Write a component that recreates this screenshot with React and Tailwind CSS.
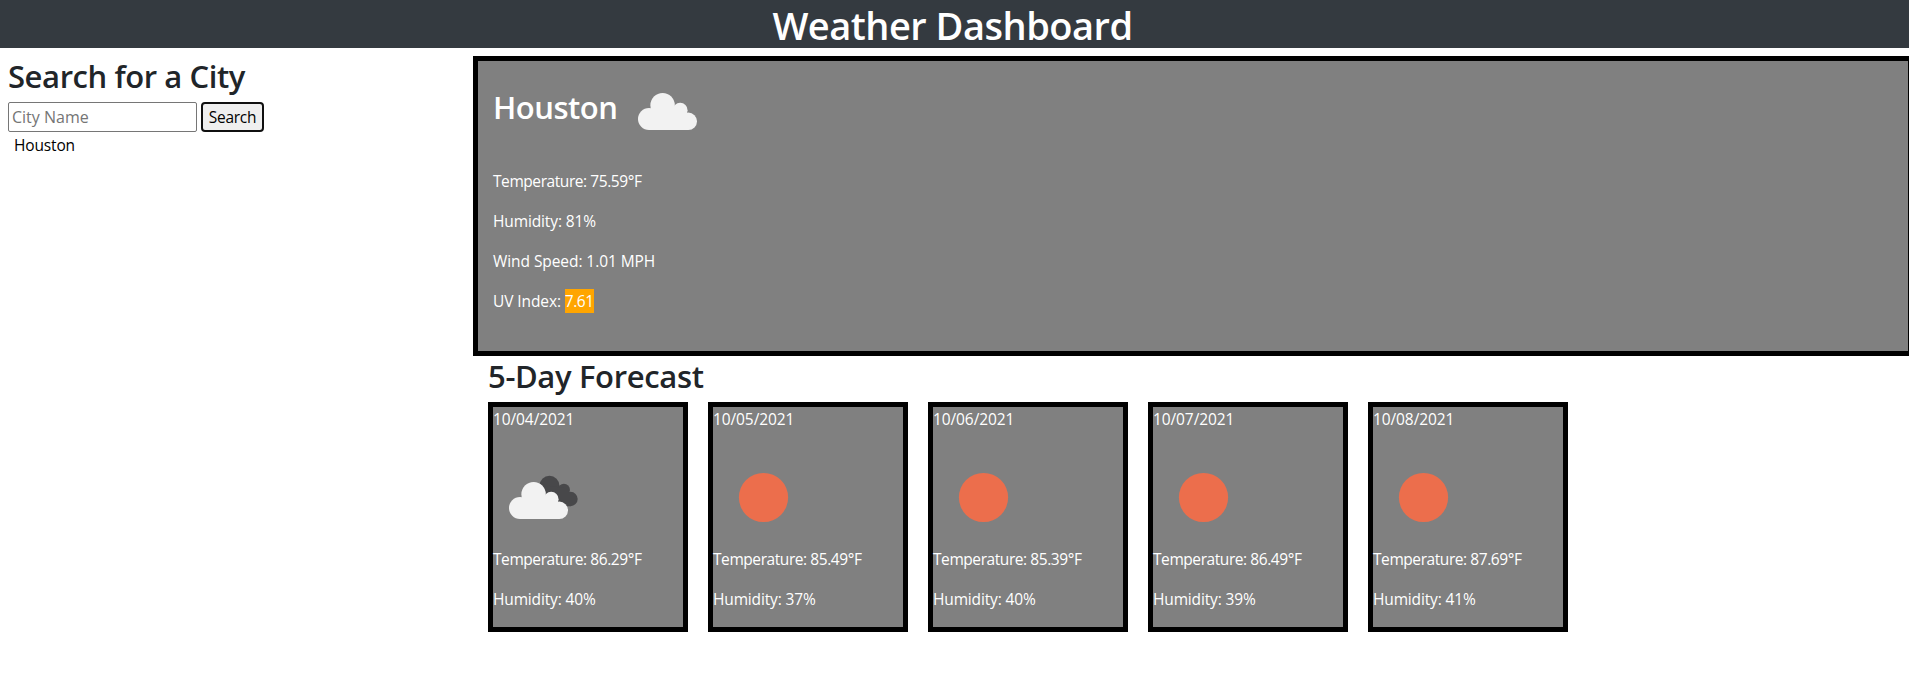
const forecast = [
  { date: '10/04/2021', icon: 'clouds', temp: '86.29', humidity: 40 },
  { date: '10/05/2021', icon: 'sun', temp: '85.49', humidity: 37 },
  { date: '10/06/2021', icon: 'sun', temp: '85.39', humidity: 40 },
  { date: '10/07/2021', icon: 'sun', temp: '86.49', humidity: 39 },
  { date: '10/08/2021', icon: 'sun', temp: '87.69', humidity: 41 },
];

function CloudShape() {
  return (
    <>
      <circle cx="11" cy="26" r="11" />
      <circle cx="24.6" cy="12.2" r="12.2" />
      <circle cx="42.2" cy="17.2" r="7.4" />
      <circle cx="50.3" cy="28.3" r="8.7" />
      <path d="M11 37V20L24 12L42 15L50.3 25V37Z" />
    </>
  );
}

function WeatherIcon({ type }) {
  return (
    <svg width="100" height="100" viewBox="0 0 100 100" className="block shrink-0">
      {type === 'sun' && <circle cx="50.5" cy="50.5" r="24.6" fill="#ec6e4c" />}
      {type === 'clouds' && (
        <>
          <g fill="#48484a" transform="translate(36.3 28.8) scale(0.82)">
            <CloudShape />
          </g>
          <g fill="#f2f2f2" transform="translate(16 35)">
            <CloudShape />
          </g>
        </>
      )}
      {type === 'cloud' && (
        <g fill="#f2f2f2" transform="translate(20 32)">
          <CloudShape />
        </g>
      )}
    </svg>
  );
}

function ForecastCard({ day }) {
  return (
    <article className="h-[230px] w-[200px] border-5 border-black bg-[#808080] text-[15.5px] leading-6 text-white">
      <p className="tracking-[-0.1px]">{day.date}</p>
      <div className="h-[116px] pt-4">
        <WeatherIcon type={day.icon} />
      </div>
      <p className="tracking-[-0.43px]">Temperature: {day.temp}°F</p>
      <p className="mt-4 tracking-[-0.15px]">Humidity: {day.humidity}%</p>
    </article>
  );
}

export default function App() {
  return (
    <div className="h-[690px] w-full overflow-hidden bg-white font-['Open_Sans','Noto_Sans',sans-serif] text-base text-[#212529]">
      <header className="flex h-12 justify-center bg-[#343a40] pr-[4px]">
        <h1 className="text-[38px] leading-[51px] font-semibold tracking-[-0.5px] whitespace-nowrap text-white">
          Weather Dashboard
        </h1>
      </header>
      <div className="flex pt-2">
        <aside className="w-[473px] shrink-0 pl-2">
          <h2 className="h-[46px] text-[31px] leading-[40px] font-semibold tracking-[-0.42px]">Search for a City</h2>
          <div className="flex gap-1">
            <input
              className="h-[30px] w-[189px] rounded-[2px] border border-[#767676] px-[3px] placeholder:text-[#757575]"
              placeholder="City Name"
            />
            <button className="h-[30px] w-[63px] rounded-[4px] border-2 border-[#101010] bg-[#efefef] pt-px text-[15.5px] tracking-[-0.3px] text-black">
              Search
            </button>
          </div>
          <p className="mt-px pl-[6px] text-[15.5px] leading-6 tracking-[-0.15px] text-black">Houston</p>
        </aside>
        <main className="shrink-0">
          <section className="h-[300px] w-[1440px] border-5 border-black bg-[#808080] px-[15px] text-[15.5px] leading-6 text-white">
            <div className="flex h-[108px]">
              <h2 className="w-[125px] pt-[27px] text-[31px] leading-[38px] font-semibold tracking-[-0.5px]">Houston</h2>
              <WeatherIcon type="cloud" />
            </div>
            <div className="flex flex-col gap-4">
              <p className="tracking-[-0.43px]">Temperature: 75.59°F</p>
              <p className="tracking-[-0.12px]">Humidity: 81%</p>
              <p className="tracking-[-0.07px]">Wind Speed: 1.01 MPH</p>
              <p className="tracking-[-0.1px]">
                UV Index: <span className="inline-block bg-[#ffa500] tracking-[-0.45px]">7.61</span>
              </p>
            </div>
          </section>
          <section className="pl-[15px]">
            <h2 className="h-[46px] text-[31px] leading-[40px] font-semibold tracking-[-0.35px]">5-Day Forecast</h2>
            <div className="flex gap-5">
              {forecast.map((day) => (
                <ForecastCard key={day.date} day={day} />
              ))}
            </div>
          </section>
        </main>
      </div>
    </div>
  );
}
